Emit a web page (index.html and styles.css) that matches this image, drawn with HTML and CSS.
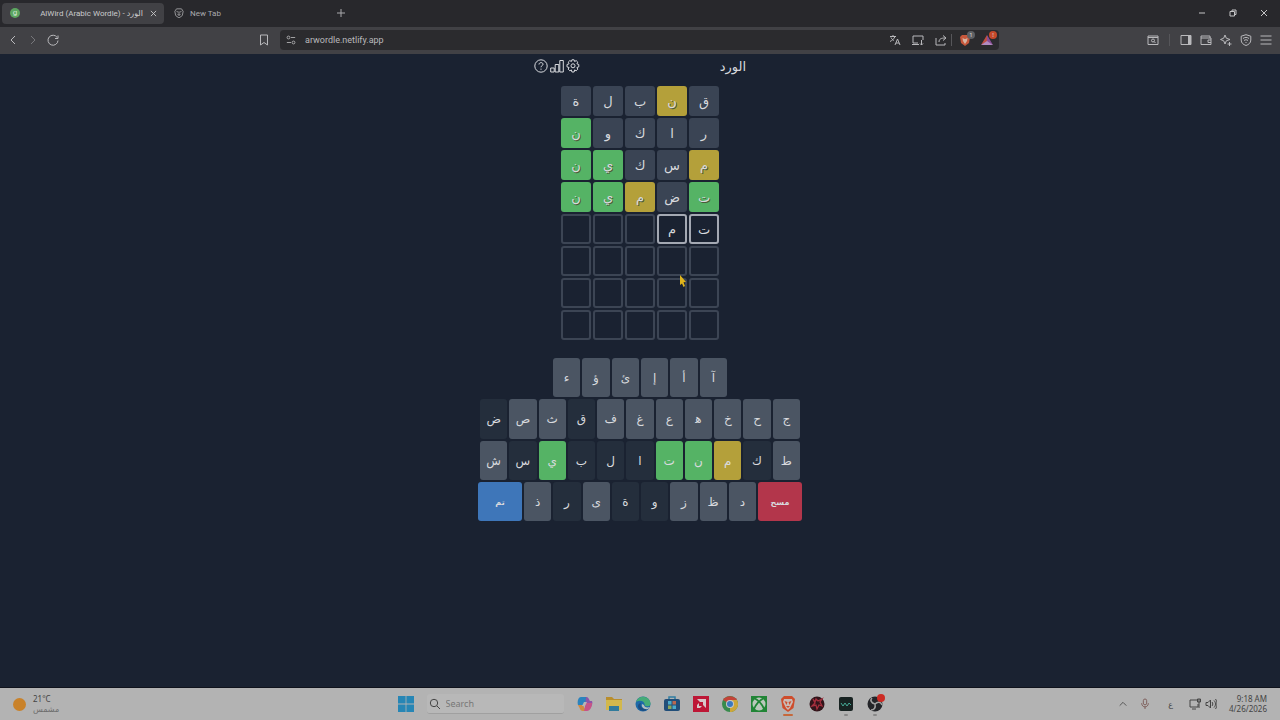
FILE: index.html
```html
<!DOCTYPE html>
<html lang="ar">
<head>
    <meta charset="UTF-8">
    <meta name="viewport" content="width=device-width, initial-scale=1.0">
    <title>AlWird (Arabic Wordle) - الورد</title>
    <link rel="stylesheet" href="styles.css">
</head>
<body>

<!-- Browser tabs -->
<header class="tabs">
    <div class="tab active">
        <span class="favicon">g</span>
        <span class="tab-title">AlWird (Arabic Wordle) - الورد</span>
        <button class="plain" aria-label="Close tab"><svg width="7" height="7" viewBox="0 0 8 8"><path d="M1 1l6 6M7 1L1 7"/></svg></button>
    </div>
    <div class="tab">
        <svg width="10" height="10" viewBox="0 0 12 12"><path d="M3 1h6l2 3-1 5-4 3-4-3-1-5z"/><path d="M3 4l2 1M9 4L7 5M4 7l2 2 2-2M6 4v5"/></svg>
        <span class="tab-title">New Tab</span>
    </div>
    <button class="plain new-tab" aria-label="New tab"><svg width="8" height="8" viewBox="0 0 8 8"><path d="M4 0v8M0 4h8"/></svg></button>
    <div class="window-buttons">
        <button class="plain" aria-label="Minimize"><svg width="8" height="8" viewBox="0 0 8 8"><path d="M1 4h6"/></svg></button>
        <button class="plain" aria-label="Restore"><svg width="8" height="8" viewBox="0 0 8 8"><path d="M1 2.500h4.500V7H1zM3 2V1h4v4.500H6"/></svg></button>
        <button class="plain" aria-label="Close"><svg width="8" height="8" viewBox="0 0 8 8"><path d="M1 1l6 6M7 1L1 7"/></svg></button>
    </div>
</header>

<!-- Browser toolbar -->
<nav class="toolbar">
    <div class="nav-buttons">
        <button class="plain" aria-label="Back"><svg width="12" height="12" viewBox="0 0 12 12"><path d="M8 2L4 6l4 4"/></svg></button>
        <button class="plain dim" aria-label="Forward"><svg width="12" height="12" viewBox="0 0 12 12"><path d="M4 2l4 4-4 4"/></svg></button>
        <button class="plain" aria-label="Reload"><svg width="12" height="12" viewBox="0 0 12 12"><path d="M10.200 3.500A5 5 0 1 0 11 6.500M11 1.500v3H8"/></svg></button>
    </div>
    <button class="plain bookmark" aria-label="Bookmark"><svg width="12" height="12" viewBox="0 0 12 12"><path d="M2.500 1h7v10L6 8.500 2.500 11z"/></svg></button>
    <div class="address">
        <svg width="10" height="10" viewBox="0 0 12 12"><circle cx="3" cy="3" r="1.700"/><circle cx="9" cy="9" r="1.700"/><path d="M6 3h5M1 9h5"/></svg>
        <input type="text" aria-label="Address" value="arwordle.netlify.app">
        <div class="address-icons">
            <button class="plain" aria-label="Translate"><svg width="12" height="12" viewBox="0 0 12 12"><path d="M1 2.500h6M4 1v1.500M6 2.500C5 5 3 6.500 1 7.500M2 3.500C3 5.500 4 6 5 6.500M6 11l2.500-6L11 11M7 9h3"/></svg></button>
            <button class="plain" aria-label="Install"><svg width="12" height="12" viewBox="0 0 12 12"><path d="M6 9H1V2h10v4M0 10.500h7M9.500 6v5M8 9.500l1.500 1.500L11 9.500"/></svg></button>
            <button class="plain" aria-label="Share"><svg width="12" height="12" viewBox="0 0 12 12"><path d="M1 4v7h9V9M4 8c0-3 2-4 6-4M8 1.500L11 4 8 6.500"/></svg></button>
        </div>
        <button class="plain shield" aria-label="Shields">
            <svg width="12" height="13" viewBox="0 0 12 13"><path class="lion" d="M3 1h6l2 2-1 6-4 3-4-3-1-6z"/><path class="lion-face" d="M3.500 4l2 1h1l2-1-.5 3-2 3-2-3z"/></svg>
            <span class="badge grey">1</span>
        </button>
        <button class="plain rewards" aria-label="Rewards">
            <svg width="12" height="12" viewBox="0 0 12 12"><path class="bat-left" d="M6 1L0 11l6-3z"/><path class="bat-right" d="M6 1l6 10-6-3z"/><path class="bat-base" d="M0 11l6-4 6 4z"/></svg>
            <span class="badge">!</span>
        </button>
    </div>
    <div class="tool-icons">
        <button class="plain" aria-label="Search tabs"><svg width="12" height="12" viewBox="0 0 12 12"><path d="M1 2h10v8.500H1zM1 3.500h10"/><circle cx="6" cy="6.500" r="1.500"/><path d="M7 7.500L8.500 9"/></svg></button>
        <span class="divider"></span>
        <button class="plain" aria-label="Sidebar"><svg width="12" height="12" viewBox="0 0 12 12"><path d="M1 1.500h10v9H1z"/><path class="solid" d="M8 2h3v8H8z"/></svg></button>
        <button class="plain" aria-label="Wallet"><svg width="12" height="12" viewBox="0 0 12 12"><path d="M10 4V2H1v8.500h10V4H1M11 6H8v2.500h3"/></svg></button>
        <button class="plain" aria-label="Leo AI"><svg width="12" height="12" viewBox="0 0 12 12"><path d="M5 1l1.300 3.200L10 5.500 6.300 6.800 5 10 3.700 6.800.5 5.500 3.700 4.200zM9.500 8v4M7.500 10h4"/></svg></button>
        <button class="plain" aria-label="VPN"><svg width="12" height="12" viewBox="0 0 12 12"><path d="M6 .7l4.800 1.500V6c0 3-2 4.500-4.800 5.500C3.200 10.500 1.200 9 1.200 6V2.200zM3 4.500c2-1.500 4-1.500 6 0M4 6.500c1.500-1 2.500-1 4 0M5.500 8.500h1"/></svg></button>
        <button class="plain" aria-label="Menu"><svg width="12" height="12" viewBox="0 0 12 12"><path d="M.5 2h11M.5 6h11M.5 10h11"/></svg></button>
    </div>
</nav>

<main>
    <div class="game-header">
        <div class="game-icons">
            <button class="plain" aria-label="Help"><svg width="14" height="14" viewBox="0 0 14 14"><circle cx="7" cy="7" r="6.200"/><path d="M5 5.500C5 3 9 3 9 5.300 9 6.700 7 6.500 7 8.300M7 9.600v1.200"/></svg></button>
            <button class="plain" aria-label="Statistics"><svg width="14" height="14" viewBox="0 0 14 14"><path d="M.7 9h3.500v4H.7zM5.200 5.500h3.600V13H5.200zM9.800 1.500h3.500V13H9.800z"/></svg></button>
            <button class="plain" aria-label="Settings"><svg width="14" height="14" viewBox="0 0 14 14"><path d="M5.900.8h2.200l.5 1.700 1.600-.9 1.600 1.600-.9 1.600 1.900.7v2.400l-1.900.6.9 1.700-1.600 1.600-1.600-.9-.5 2.100H5.900l-.5-2.100-1.600.9-1.600-1.600.9-1.700L1 7.900V5.500l2.100-.7-.9-1.600 1.600-1.600 1.600.9z"/><circle cx="7" cy="6.800" r="2"/></svg></button>
        </div>
        <h1>الورد</h1>
    </div>

    <div id="board" dir="rtl"></div>
    <div id="keyboard"></div>

    <svg class="cursor" width="8" height="13" viewBox="0 0 8 13"><path d="M1 0l6 7-2.500.3L6 11l-1.500 1L3 8.500 1 10z"/></svg>
</main>

<!-- Windows taskbar -->
<footer class="taskbar">
    <div class="weather">
        <span class="sun"></span>
        <div>
            <div>21°C</div>
            <div class="condition">مشمس</div>
        </div>
    </div>
    <div class="apps">
        <button class="plain" aria-label="Start"><svg width="16" height="16" viewBox="0 0 16 16"><path fill="#2786b5" d="M0 0h7.600v7.600H0zM8.400 0H16v7.600H8.400zM0 8.400h7.600V16H0zM8.400 8.400H16V16H8.400z"/></svg></button>
        <label class="search">
            <svg width="12" height="12" viewBox="0 0 12 12"><circle cx="5" cy="5" r="3.700"/><path d="M8 8l3 3"/></svg>
            <input type="text" placeholder="Search">
        </label>
        <button class="plain" aria-label="Copilot"><svg width="16" height="16" viewBox="0 0 16 16"><path fill="#2b83bd" d="M4 1h5c2 0 2 2 1 4L8 9H1C0 6 1 1 4 1z"/><path fill="#8e55a8" d="M9 1c3 0 3 3 4 4h2c1 2 0 4-1 6H8z"/><path fill="#d08b42" d="M1 9h5l3 6H6c-3 0-3-3-4-4z"/><path fill="#c75387" d="M9 7h6c0 4-2 8-5 8H7z"/><path fill="#b8b5b5" d="M7 6h3l-2 4H5z"/></svg></button>
        <button class="plain" aria-label="File Explorer"><svg width="16" height="16" viewBox="0 0 16 16"><path fill="#b98e2d" d="M0 1h6l2 2h8v5H0z"/><path fill="#d2b84c" d="M0 4h16v10H0z"/><path fill="#317b9c" d="M3 10h10v5H3z"/></svg></button>
        <button class="plain" aria-label="Edge"><svg width="16" height="16" viewBox="0 0 16 16"><circle cx="8" cy="8" r="7.500" fill="#1d69a8"/><path fill="#45ab77" d="M1 6C3-1 14-1 15.500 7c.5 4-5 4-6 2 1-3-4-6-8.500-3z"/><path fill="#1b4e83" d="M6 7c-2 4 2 7 8 5-4 5-11 3-11-2 0-2 2-3 3-3z"/><path fill="#b2bec0" d="M9 9c0 2 3 3 6 2l-2 2c-4 1-7-2-6-5z"/></svg></button>
        <button class="plain" aria-label="Store"><svg width="16" height="16" viewBox="0 0 16 16"><path d="M5 4V1h6v3" fill="none" stroke="#317ea3" stroke-width="1.500"/><rect y="3" width="16" height="12" rx="2" fill="#214e79"/><path fill="#4baaca" d="M4 5h3.500v3.500H4zM8.500 9.500H12V13H8.500z"/><path fill="#b86850" d="M8.500 5H12v3.500H8.500z"/><path fill="#8ba65b" d="M4 9.500h3.500V13H4z"/></svg></button>
        <button class="plain" aria-label="AMD"><svg width="16" height="16" viewBox="0 0 16 16"><path fill="#bd1736" d="M0 0h16v16H0z"/><path fill="#d7c7c9" d="M4 3h9v9l-3-3V6H7zM6 7v3h3l-2 2H4V9z"/></svg></button>
        <button class="plain" aria-label="Chrome"><svg width="16" height="16" viewBox="0 0 16 16"><circle cx="8" cy="8" r="8" fill="#388b4c"/><path fill="#c34338" d="M8 8L1 4c3-5 11-5 14 0z"/><path fill="#cda738" d="M8 8V4h7c3 6-1 12-7 12z"/><circle cx="8" cy="8" r="4" fill="#c7c7c7"/><circle cx="8" cy="8" r="3" fill="#3b79bd"/></svg></button>
        <button class="plain" aria-label="Xbox"><svg width="16" height="16" viewBox="0 0 16 16"><path fill="#218536" d="M0 0h16v16H0z"/><circle cx="8" cy="8" r="6.500" fill="#bbc8bb"/><path d="M3 2c4 2 8 6 10 11M13 2C9 4 5 8 3 13" fill="none" stroke="#218536" stroke-width="1.800"/></svg></button>
        <button class="plain running current" aria-label="Brave"><svg width="16" height="16" viewBox="0 0 16 16"><path fill="#ce4d2c" d="M4 0h8l3 3-1.500 9L8 16l-5.500-4L1 3z"/><path fill="#c9bbb6" d="M4 3h8l1 3-3 6-2 2-2-2-3-6z"/><path fill="#ce4d2c" d="M4.500 5l3 1-1 3zM11.500 5l-3 1 1 3zM6 10h4l-2 2z"/></svg></button>
        <button class="plain" aria-label="Red Kit"><svg width="16" height="16" viewBox="0 0 16 16"><circle cx="8" cy="8" r="7.500" fill="#32151b"/><path fill="none" stroke="#a52e3d" stroke-width="1.300" d="M4 3l2 4-3 3 4-1 1 4 2-4 3 1-2-4 2-3-4 2-2-2-1 3z"/></svg></button>
        <button class="plain running" aria-label="Monitor"><svg width="16" height="16" viewBox="0 0 16 16"><rect x="1" y="1" width="14" height="14" rx="2" fill="#182322"/><path d="M3 7l2 3 2-3 2 3 2-3 2 2" fill="none" stroke="#45a894"/></svg></button>
        <button class="plain running obs" aria-label="OBS"><svg width="16" height="16" viewBox="0 0 16 16"><circle cx="8" cy="8" r="7.500" fill="#242529"/><path d="M8 8c-4-1-5-4-3-6M8 8c3-3 6-2 7 1M8 8c1 4-1 6-4 6" fill="none" stroke="#a1a1a1" stroke-width="1.500"/></svg><span class="rec-dot"></span></button>
    </div>
    <div class="tray">
        <svg width="10" height="10" viewBox="0 0 12 12"><path d="M2 8l4-4 4 4"/></svg>
        <svg class="mic" width="10" height="12" viewBox="0 0 12 14"><rect x="4" y="1" width="4" height="7" rx="2"/><path d="M2 6c0 6 8 6 8 0M6 10v3"/></svg>
        <span class="language">ع</span>
        <div class="system">
            <svg width="12" height="12" viewBox="0 0 12 12"><path d="M8 2H1v7h8V6M3 11h4M10 1v9M8.500 1h3v3h-3z"/></svg>
            <svg width="12" height="12" viewBox="0 0 12 12"><path d="M1 4.500h2L5.500 2v8L3 7.500H1zM7 4c1 1 1 3 0 4M9 2.500c2 2 2 5 0 7M10.500 1c2 3 2 7 0 10"/></svg>
        </div>
        <div class="clock">
            <div>9:18 AM</div>
            <div>4/26/2026</div>
        </div>
    </div>
</footer>

<script src="game.js"></script>
</body>
</html>
```
FILE: styles.css
```css
* {
    box-sizing: border-box;
}
body {
    display: flex;
    flex-direction: column;
    min-height: 100vh;
    margin: 0;
    background-color: #1a2231;
    color: #d8dade;
    font-family: "Noto Sans", "DejaVu Sans", sans-serif;
}
h1 {
    margin: 0;
    font-size: 13px;
    line-height: 24px;
    font-weight: normal;
}
svg {
    display: block;
    flex: none;
    fill: none;
    stroke: currentColor;
}
button, input {
    font-family: inherit;
    color: inherit;
}
input {
    min-width: 0;
    padding: 0;
    border: none;
    outline: none;
    background: none;
}
.plain {
    position: relative;
    padding: 0;
    border: none;
    background: none;
    cursor: pointer;
}

/* Browser */
.tabs {
    display: flex;
    align-items: center;
    height: 27px;
    padding: 0 12px 1px 2px;
    background-color: #28282c;
    color: #a9a9ac;
    font-family: Roboto, "DejaVu Sans", sans-serif;
    font-size: 8px;
}
.tab {
    display: flex;
    align-items: center;
    gap: 6px;
    width: 162px;
    height: 21px;
    padding: 0 7px 0 10px;
    border-radius: 4px;
}
.tab.active {
    gap: 4px;
    padding-left: 8px;
    background-color: #414145;
    color: #cacacc;
}
.tab-title {
    flex: 1;
    white-space: nowrap;
}
.active .tab-title {
    text-align: right;
    margin-right: 3px;
}
.favicon {
    width: 10px;
    height: 10px;
    border-radius: 50%;
    background-color: #5ca660;
    color: #d5e5d5;
    line-height: 10px;
    text-align: center;
}
.new-tab {
    margin-left: 11px;
}
.window-buttons {
    display: flex;
    gap: 23px;
    margin-left: auto;
    color: #c4c4c6;
}
.toolbar {
    display: flex;
    align-items: center;
    height: 27px;
    padding: 0 8px 1px 7px;
    background-color: #414145;
    color: #b9b9bc;
}
.nav-buttons {
    display: flex;
    gap: 8px;
}
.dim {
    color: #77777b;
}
.bookmark {
    margin-left: 199px;
}
.address {
    display: flex;
    align-items: center;
    flex: 1;
    height: 20px;
    margin-left: 10px;
    padding: 0 6px;
    border-radius: 4px;
    background-color: #2b2b2e;
}
.address input {
    flex: 1;
    margin-left: 9px;
    font-family: Roboto, sans-serif;
    font-size: 9px;
}
.address-icons {
    display: flex;
    gap: 11px;
    padding-right: 4px;
    border-right: 1px solid #56565a;
}
.shield {
    margin-left: 7px;
}
.rewards {
    margin-left: 10px;
}
.lion {
    fill: #c6573b;
    stroke: none;
}
.lion-face {
    fill: #d5b5a5;
    stroke: none;
}
.bat-left {
    fill: #bd5042;
    stroke: none;
}
.bat-right {
    fill: #8a4c96;
    stroke: none;
}
.bat-base {
    fill: #b28bc0;
    stroke: none;
}
.badge {
    position: absolute;
    top: -3px;
    right: -4px;
    width: 8px;
    height: 8px;
    border-radius: 50%;
    background-color: #c5492b;
    color: #ddd;
    font-size: 6px;
    line-height: 8px;
}
.badge.grey {
    background-color: #5d6064;
}
.tool-icons {
    display: flex;
    align-items: center;
    gap: 8px;
    margin-left: 148px;
}
.divider {
    width: 1px;
    height: 12px;
    margin: 0 2px;
    background-color: #56565a;
}
.solid {
    fill: currentColor;
    stroke: none;
}

/* Game */
main {
    position: relative;
    flex: 1;
    display: flex;
    flex-direction: column;
    align-items: center;
}
.game-header {
    display: flex;
    justify-content: space-between;
    align-items: center;
    width: 212px;
    height: 24px;
    margin-bottom: 8px;
}
.game-icons {
    display: flex;
    gap: 2px;
}
#board {
    display: grid;
    grid-template-columns: repeat(5, 30px);
    grid-auto-rows: 30px;
    gap: 2px;
}
.tile {
    display: flex;
    align-items: center;
    justify-content: center;
    border: 2px solid #3c4554;
    border-radius: 3px;
    font-size: 13px;
}
.tile.typed {
    border-color: #a4a9b3;
}
.tile.absent {
    border-color: #3a4454;
    background-color: #3a4454;
}
.tile.present {
    border-color: #b4a03a;
    background-color: #b4a03a;
}
.tile.correct {
    border-color: #55b365;
    background-color: #55b365;
}
.tile.present, .tile.correct {
    text-shadow: 1px 1px 0 #4a5a3a;
}
#keyboard {
    display: grid;
    grid-auto-rows: 1fr;
    gap: 2px;
    height: 163px;
    margin-top: 18px;
}
.key-row {
    display: flex;
    justify-content: center;
    gap: 2px;
    width: 320px;
    margin: 0 auto;
}
.key-row:first-child {
    width: 174px;
}
.key-row:last-child {
    width: 324px;
}
.key {
    flex: 1;
    padding: 0;
    border: none;
    border-radius: 3px;
    background-color: #4b5563;
    font-size: 12px;
    cursor: pointer;
}
.key.absent {
    background-color: #242e3c;
}
.key.present {
    background-color: #b4a03a;
}
.key.correct {
    background-color: #55b365;
}
.key.enter, .key.delete {
    flex: 0 0 44px;
    font-size: 8px;
    font-weight: bold;
}
.key.enter {
    background-color: #3e76b9;
}
.key.delete {
    background-color: #b3364b;
}
.cursor {
    position: absolute;
    top: 221px;
    left: calc(50% + 39px);
    fill: #e0b51c;
    stroke: none;
}

/* Taskbar */
.taskbar {
    display: grid;
    grid-template-columns: 1fr auto 1fr;
    align-items: center;
    height: 33px;
    padding: 0 13px;
    border-top: 1px solid #10131c;
    background-color: #b3b3b3;
    color: #444;
    font-size: 8px;
    line-height: 10px;
}
.weather {
    display: flex;
    align-items: center;
    gap: 7px;
}
.condition {
    color: #6c6c6c;
}
.sun {
    width: 13px;
    height: 13px;
    border-radius: 50%;
    background-color: #c9822a;
}
.apps {
    display: flex;
    align-items: center;
    gap: 13px;
}
.apps button svg {
    stroke: none;
}
.search {
    display: flex;
    align-items: center;
    gap: 5px;
    width: 137px;
    height: 20px;
    padding: 0 2px;
    border-radius: 3px;
    border-bottom: 1px solid #a0a0a0;
    background-color: #b8b8b8;
}
.search input {
    flex: 1;
    font-size: 9px;
}
.search input::placeholder {
    color: #777;
}
.running::after {
    content: "";
    position: absolute;
    bottom: -4px;
    left: 6px;
    width: 4px;
    height: 2px;
    border-radius: 1px;
    background-color: #888;
}
.current::after {
    left: 3px;
    width: 10px;
    background-color: #c5683b;
}
.rec-dot {
    position: absolute;
    top: -2px;
    right: -2px;
    width: 8px;
    height: 8px;
    border-radius: 50%;
    background-color: #cc2c25;
}
.tray {
    display: flex;
    align-items: center;
    justify-content: flex-end;
    gap: 12px;
}
.mic {
    color: #76524e;
}
.language {
    margin: 0 4px 0 6px;
}
.system {
    display: flex;
    gap: 4px;
}
.clock {
    text-align: right;
}
```
FILE: game.js
```javascript
// Each guess is read right to left, states: a = absent, p = present, c = correct
const guesses = [
    { letters: 'قنبلة', states: 'apaaa' },
    { letters: 'راكون', states: 'aaaac' },
    { letters: 'مسكين', states: 'paacc' },
    { letters: 'تضمين', states: 'capcc' }
];
const currentGuess = 'تم';
const maxGuesses = 8;
const wordLength = 5;
const stateNames = { a: 'absent', p: 'present', c: 'correct' };

const keyRows = [
    ['ء', 'ؤ', 'ئ', 'إ', 'أ', 'آ'],
    ['ض', 'ص', 'ث', 'ق', 'ف', 'غ', 'ع', 'ه', 'خ', 'ح', 'ج'],
    ['ش', 'س', 'ي', 'ب', 'ل', 'ا', 'ت', 'ن', 'م', 'ك', 'ط'],
    ['تم', 'ذ', 'ر', 'ى', 'ة', 'و', 'ز', 'ظ', 'د', 'مسح']
];

function drawBoard() {
    const board = document.getElementById('board');
    for (let row = 0; row < maxGuesses; row++) {
        for (let col = 0; col < wordLength; col++) {
            const tile = document.createElement('div');
            tile.className = 'tile';
            if (row < guesses.length) {
                tile.innerText = guesses[row].letters[col];
                tile.classList.add(stateNames[guesses[row].states[col]]);
            } else if (row === guesses.length && col < currentGuess.length) {
                tile.innerText = currentGuess[col];
                tile.classList.add('typed');
            }
            board.appendChild(tile);
        }
    }
}

function getKeyState(letter) {
    let best = '';
    guesses.forEach(guess => {
        for (let i = 0; i < wordLength; i++) {
            if (guess.letters[i] !== letter) continue;
            const state = guess.states[i];
            if (state === 'c' || best === '' || (state === 'p' && best === 'a')) {
                best = state;
            }
        }
    });
    return best;
}

function drawKeyboard() {
    const keyboard = document.getElementById('keyboard');
    keyRows.forEach(letters => {
        const row = document.createElement('div');
        row.className = 'key-row';
        letters.forEach(letter => {
            const key = document.createElement('button');
            key.className = 'key';
            // A joiner keeps the heh in its two-eyed initial form
            key.innerText = letter === 'ه' ? 'ه\u200d' : letter;
            const state = getKeyState(letter);
            if (letter === 'تم') key.classList.add('enter');
            else if (letter === 'مسح') key.classList.add('delete');
            else if (state) key.classList.add(stateNames[state]);
            row.appendChild(key);
        });
        keyboard.appendChild(row);
    });
}

drawBoard();
drawKeyboard();
```
